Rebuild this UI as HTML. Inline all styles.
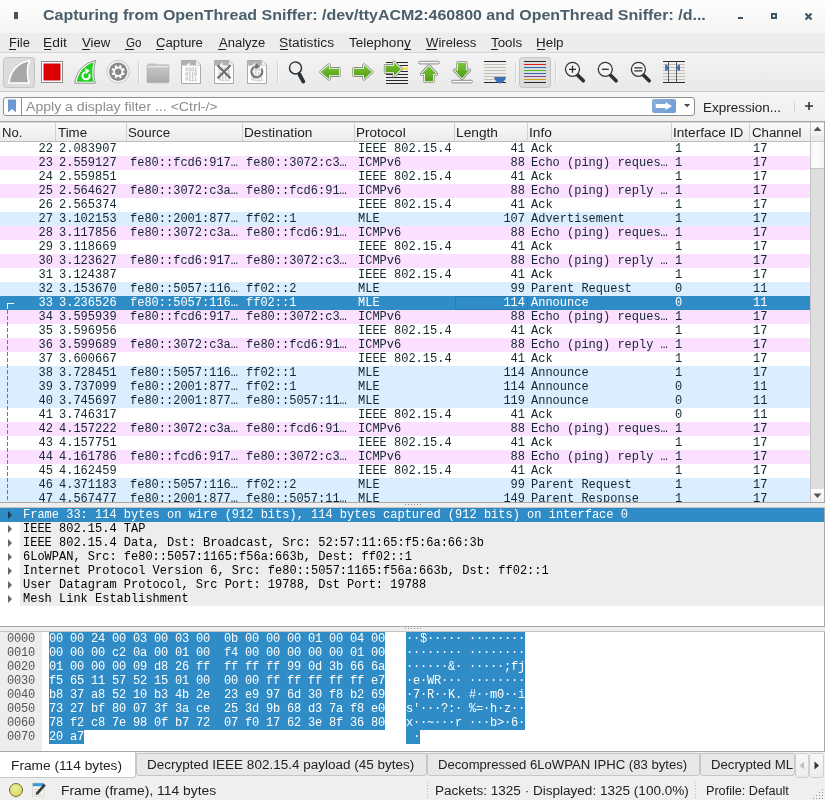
<!DOCTYPE html>
<html><head><meta charset="utf-8">
<style>
*{margin:0;padding:0;box-sizing:border-box}
body{will-change:transform}
html,body{width:825px;height:800px;overflow:hidden;background:#efefef;font-family:"Liberation Sans",sans-serif;color:#1b1b1b;position:relative}
.a{position:absolute;white-space:pre}
.m{font-family:"Liberation Mono",monospace;font-size:12px;line-height:14px}
u{text-decoration:none;border-bottom:1px solid currentColor}
</style></head><body>

<div class="a" style="left:0;top:0;width:825px;height:33px;background:linear-gradient(#fefefe,#f5f4f3)"></div>
<div class="a" style="left:14px;top:12px;width:4px;height:7px;background:#3f5563"></div>
<div class="a" style="left:43.00px;top:5px;font-size:15px;line-height:20px;font-weight:bold;color:#4a5e6c;transform:scaleX(1.0660);transform-origin:0 0;">Capturing from OpenThread Sniffer: /dev/ttyACM2:460800 and OpenThread Sniffer: /d...</div>
<div class="a" style="left:738px;top:17px;width:5px;height:2px;background:#3f5563"></div>
<div class="a" style="left:771px;top:13px;width:6px;height:6px;border:2px solid #3f5563"></div>
<svg class="a" style="left:804px;top:12px" width="9" height="9"><path d="M1.5 1.5 L7.5 7.5 M7.5 1.5 L1.5 7.5" stroke="#3f5563" stroke-width="2.2"/></svg>
<div class="a" style="left:0;top:33px;width:825px;height:20px;background:#ececec;border-bottom:1px solid #d6d6d6"></div>
<div class="a" style="left:8.52px;top:33px;font-size:12px;line-height:20px;font-weight:normal;color:#222222;transform:scaleX(1.0833);transform-origin:0 0;">File</div>
<div class="a" style="left:43.05px;top:33px;font-size:12px;line-height:20px;font-weight:normal;color:#222222;transform:scaleX(1.1550);transform-origin:0 0;">Edit</div>
<div class="a" style="left:81.80px;top:33px;font-size:12px;line-height:20px;font-weight:normal;color:#222222;transform:scaleX(1.1000);transform-origin:0 0;">View</div>
<div class="a" style="left:125.50px;top:33px;font-size:12px;line-height:20px;font-weight:normal;color:#222222;transform:scaleX(0.9625);transform-origin:0 0;">Go</div>
<div class="a" style="left:156.00px;top:33px;font-size:12px;line-height:20px;font-weight:normal;color:#222222;transform:scaleX(1.1000);transform-origin:0 0;">Capture</div>
<div class="a" style="left:218.60px;top:33px;font-size:12px;line-height:20px;font-weight:normal;color:#222222;transform:scaleX(1.0837);transform-origin:0 0;">Analyze</div>
<div class="a" style="left:279.05px;top:33px;font-size:12px;line-height:20px;font-weight:normal;color:#222222;transform:scaleX(1.1489);transform-origin:0 0;">Statistics</div>
<div class="a" style="left:349.30px;top:33px;font-size:12px;line-height:20px;font-weight:normal;color:#222222;transform:scaleX(1.1273);transform-origin:0 0;">Telephony</div>
<div class="a" style="left:425.80px;top:33px;font-size:12px;line-height:20px;font-weight:normal;color:#222222;transform:scaleX(1.0935);transform-origin:0 0;">Wireless</div>
<div class="a" style="left:491.30px;top:33px;font-size:12px;line-height:20px;font-weight:normal;color:#222222;transform:scaleX(1.1107);transform-origin:0 0;">Tools</div>
<div class="a" style="left:536.08px;top:33px;font-size:12px;line-height:20px;font-weight:normal;color:#222222;transform:scaleX(1.1167);transform-origin:0 0;">Help</div>
<div class="a" style="left:9px;top:49px;width:7px;height:1px;background:#222"></div>
<div class="a" style="left:44px;top:49px;width:7px;height:1px;background:#222"></div>
<div class="a" style="left:82px;top:49px;width:8px;height:1px;background:#222"></div>
<div class="a" style="left:125px;top:49px;width:9px;height:1px;background:#222"></div>
<div class="a" style="left:156px;top:49px;width:8px;height:1px;background:#222"></div>
<div class="a" style="left:218px;top:49px;width:8px;height:1px;background:#222"></div>
<div class="a" style="left:280px;top:49px;width:8px;height:1px;background:#222"></div>
<div class="a" style="left:404px;top:49px;width:7px;height:1px;background:#222"></div>
<div class="a" style="left:426px;top:49px;width:11px;height:1px;background:#222"></div>
<div class="a" style="left:491px;top:49px;width:7px;height:1px;background:#222"></div>
<div class="a" style="left:537px;top:49px;width:8px;height:1px;background:#222"></div>
<div class="a" style="left:0;top:53px;width:825px;height:39px;background:linear-gradient(#f3f3f3,#e9e9e9);border-bottom:1px solid #cdcdcd"></div>
<svg class="a" style="left:0;top:0" width="825" height="92" viewBox="0 0 825 92"><defs><linearGradient id="gf" x1="0" y1="0" x2="0" y2="1"><stop offset="0" stop-color="#c9c9c9"/><stop offset="1" stop-color="#a9a9a9"/></linearGradient><linearGradient id="gg" x1="0" y1="0" x2="0" y2="1"><stop offset="0" stop-color="#7cc63a"/><stop offset="1" stop-color="#4e9a10"/></linearGradient></defs><rect x="3.5" y="57.5" width="31" height="30" rx="3" fill="#dcdcdc" stroke="#c4c4c4"/><path d="M9 83 C10 72 17 63 29.5 60.5 C27 67 27 76 29 83 Z" fill="#a8a8a8" stroke="#ffffff" stroke-width="1.6"/><rect x="41.5" y="61.5" width="21" height="21" fill="#fff" stroke="#8a8a8a"/><rect x="43.5" y="63.5" width="17" height="17" fill="#dd0000"/><path d="M74.8 83.2 C75.8 72 84 62.5 95.8 60.5 C93.3 67 93.3 76 95.3 83.2 Z" fill="#fff" stroke="#8f8f8f" stroke-width="1"/><path d="M76.8 81.8 C78 72.5 85.5 64.5 93.6 62.3 C91.8 68.5 91.8 76 93.6 81.8 Z" fill="#22d022"/><path d="M85 72.3 A3.6 3.6 0 1 0 89.2 74" fill="none" stroke="#fff" stroke-width="2"/><path d="M85.2 68.2 L89.8 70.5 L85.8 74.2 Z" fill="#fff"/><circle cx="118.2" cy="71.7" r="11.2" fill="#f7f7f7" stroke="#c6c6c6" stroke-width="1"/><circle cx="118.2" cy="71.7" r="9.2" fill="#8a8a8a"/><rect x="117.10000000000001" y="65.0" width="2.2" height="2.5" fill="#fff" transform="rotate(22.5 118.2 71.7)"/><rect x="117.10000000000001" y="65.0" width="2.2" height="2.5" fill="#fff" transform="rotate(67.5 118.2 71.7)"/><rect x="117.10000000000001" y="65.0" width="2.2" height="2.5" fill="#fff" transform="rotate(112.5 118.2 71.7)"/><rect x="117.10000000000001" y="65.0" width="2.2" height="2.5" fill="#fff" transform="rotate(157.5 118.2 71.7)"/><rect x="117.10000000000001" y="65.0" width="2.2" height="2.5" fill="#fff" transform="rotate(202.5 118.2 71.7)"/><rect x="117.10000000000001" y="65.0" width="2.2" height="2.5" fill="#fff" transform="rotate(247.5 118.2 71.7)"/><rect x="117.10000000000001" y="65.0" width="2.2" height="2.5" fill="#fff" transform="rotate(292.5 118.2 71.7)"/><rect x="117.10000000000001" y="65.0" width="2.2" height="2.5" fill="#fff" transform="rotate(337.5 118.2 71.7)"/><circle cx="118.2" cy="71.7" r="5" fill="#fff"/><circle cx="118.2" cy="71.7" r="3.3" fill="#8a8a8a"/><line x1="138.5" y1="62" x2="138.5" y2="83" stroke="#d0d0d0"/><line x1="139.5" y1="62" x2="139.5" y2="83" stroke="#fbfbfb"/><line x1="277.5" y1="62" x2="277.5" y2="83" stroke="#d0d0d0"/><line x1="278.5" y1="62" x2="278.5" y2="83" stroke="#fbfbfb"/><line x1="515.5" y1="62" x2="515.5" y2="83" stroke="#d0d0d0"/><line x1="516.5" y1="62" x2="516.5" y2="83" stroke="#fbfbfb"/><line x1="555.5" y1="62" x2="555.5" y2="83" stroke="#d0d0d0"/><line x1="556.5" y1="62" x2="556.5" y2="83" stroke="#fbfbfb"/><path d="M147.5 65 L149 63.3 L155 63.3 L156 65 Z" fill="#cfcfcf"/><rect x="147" y="64.8" width="22" height="18" rx="1" fill="url(#gf)" stroke="#b0b0b0" stroke-width="0.6"/><line x1="147.5" y1="66.8" x2="168.5" y2="66.8" stroke="#f6f6f6" stroke-width="1"/><path d="M181.5 60.5 L196 60.5 L200.5 65 L200.5 83.5 L181.5 83.5 Z" fill="#fdfdfd" stroke="#aaaaaa"/><path d="M182 61 L195.8 61 L200 65.2 L200 65.5 L182 65.5 Z" fill="#b2b2b2"/><path d="M186 65.5 C188 64 189 63 189.5 62 C189.5 63.5 189.5 64.5 190 65.5 Z" fill="#fdfdfd"/><path d="M196 61 L196 65 L200 65 Z" fill="#f4f4f4"/><ellipse cx="186.80" cy="69.20" rx="0.95" ry="1.6" fill="none" stroke="#b4b4b4" stroke-width="0.8"/><path d="M188.90 68.10 L189.90 67.50 V71.10 M188.80 71.10 H190.80" fill="none" stroke="#b4b4b4" stroke-width="0.8"/><ellipse cx="192.60" cy="69.20" rx="0.95" ry="1.6" fill="none" stroke="#b4b4b4" stroke-width="0.8"/><path d="M194.70 68.10 L195.70 67.50 V71.10 M194.60 71.10 H196.60" fill="none" stroke="#b4b4b4" stroke-width="0.8"/><ellipse cx="186.80" cy="74.00" rx="0.95" ry="1.6" fill="none" stroke="#b4b4b4" stroke-width="0.8"/><path d="M188.90 72.90 L189.90 72.30 V75.90 M188.80 75.90 H190.80" fill="none" stroke="#b4b4b4" stroke-width="0.8"/><path d="M191.80 72.90 L192.80 72.30 V75.90 M191.70 75.90 H193.70" fill="none" stroke="#b4b4b4" stroke-width="0.8"/><ellipse cx="195.50" cy="74.00" rx="0.95" ry="1.6" fill="none" stroke="#b4b4b4" stroke-width="0.8"/><ellipse cx="186.80" cy="78.80" rx="0.95" ry="1.6" fill="none" stroke="#b4b4b4" stroke-width="0.8"/><path d="M188.90 77.70 L189.90 77.10 V80.70 M188.80 80.70 H190.80" fill="none" stroke="#b4b4b4" stroke-width="0.8"/><path d="M191.80 77.70 L192.80 77.10 V80.70 M191.70 80.70 H193.70" fill="none" stroke="#b4b4b4" stroke-width="0.8"/><path d="M194.70 77.70 L195.70 77.10 V80.70 M194.60 80.70 H196.60" fill="none" stroke="#b4b4b4" stroke-width="0.8"/><path d="M214.5 60.5 L229 60.5 L233.5 65 L233.5 83.5 L214.5 83.5 Z" fill="#fdfdfd" stroke="#aaaaaa"/><path d="M215 61 L228.8 61 L233 65.2 L233 65.5 L215 65.5 Z" fill="#b2b2b2"/><path d="M219 65.5 C221 64 222 63 222.5 62 C222.5 63.5 222.5 64.5 223 65.5 Z" fill="#fdfdfd"/><path d="M229 61 L229 65 L233 65 Z" fill="#f4f4f4"/><ellipse cx="219.80" cy="69.20" rx="0.95" ry="1.6" fill="none" stroke="#b4b4b4" stroke-width="0.8"/><path d="M221.90 68.10 L222.90 67.50 V71.10 M221.80 71.10 H223.80" fill="none" stroke="#b4b4b4" stroke-width="0.8"/><ellipse cx="225.60" cy="69.20" rx="0.95" ry="1.6" fill="none" stroke="#b4b4b4" stroke-width="0.8"/><path d="M227.70 68.10 L228.70 67.50 V71.10 M227.60 71.10 H229.60" fill="none" stroke="#b4b4b4" stroke-width="0.8"/><ellipse cx="219.80" cy="74.00" rx="0.95" ry="1.6" fill="none" stroke="#b4b4b4" stroke-width="0.8"/><path d="M221.90 72.90 L222.90 72.30 V75.90 M221.80 75.90 H223.80" fill="none" stroke="#b4b4b4" stroke-width="0.8"/><path d="M224.80 72.90 L225.80 72.30 V75.90 M224.70 75.90 H226.70" fill="none" stroke="#b4b4b4" stroke-width="0.8"/><ellipse cx="228.50" cy="74.00" rx="0.95" ry="1.6" fill="none" stroke="#b4b4b4" stroke-width="0.8"/><ellipse cx="219.80" cy="78.80" rx="0.95" ry="1.6" fill="none" stroke="#b4b4b4" stroke-width="0.8"/><path d="M221.90 77.70 L222.90 77.10 V80.70 M221.80 80.70 H223.80" fill="none" stroke="#b4b4b4" stroke-width="0.8"/><path d="M224.80 77.70 L225.80 77.10 V80.70 M224.70 80.70 H226.70" fill="none" stroke="#b4b4b4" stroke-width="0.8"/><path d="M227.70 77.70 L228.70 77.10 V80.70 M227.60 80.70 H229.60" fill="none" stroke="#b4b4b4" stroke-width="0.8"/><path d="M217.5 65.2 L230.5 78.2 M230.5 65.2 L217.5 78.2" stroke="#6a6a6a" stroke-width="2"/><path d="M247.5 60.5 L262 60.5 L266.5 65 L266.5 83.5 L247.5 83.5 Z" fill="#fdfdfd" stroke="#aaaaaa"/><path d="M248 61 L261.8 61 L266 65.2 L266 65.5 L248 65.5 Z" fill="#b2b2b2"/><path d="M252 65.5 C254 64 255 63 255.5 62 C255.5 63.5 255.5 64.5 256 65.5 Z" fill="#fdfdfd"/><path d="M262 61 L262 65 L266 65 Z" fill="#f4f4f4"/><ellipse cx="252.80" cy="69.20" rx="0.95" ry="1.6" fill="none" stroke="#b4b4b4" stroke-width="0.8"/><path d="M254.90 68.10 L255.90 67.50 V71.10 M254.80 71.10 H256.80" fill="none" stroke="#b4b4b4" stroke-width="0.8"/><ellipse cx="258.60" cy="69.20" rx="0.95" ry="1.6" fill="none" stroke="#b4b4b4" stroke-width="0.8"/><path d="M260.70 68.10 L261.70 67.50 V71.10 M260.60 71.10 H262.60" fill="none" stroke="#b4b4b4" stroke-width="0.8"/><ellipse cx="252.80" cy="74.00" rx="0.95" ry="1.6" fill="none" stroke="#b4b4b4" stroke-width="0.8"/><path d="M254.90 72.90 L255.90 72.30 V75.90 M254.80 75.90 H256.80" fill="none" stroke="#b4b4b4" stroke-width="0.8"/><path d="M257.80 72.90 L258.80 72.30 V75.90 M257.70 75.90 H259.70" fill="none" stroke="#b4b4b4" stroke-width="0.8"/><ellipse cx="261.50" cy="74.00" rx="0.95" ry="1.6" fill="none" stroke="#b4b4b4" stroke-width="0.8"/><ellipse cx="252.80" cy="78.80" rx="0.95" ry="1.6" fill="none" stroke="#b4b4b4" stroke-width="0.8"/><path d="M254.90 77.70 L255.90 77.10 V80.70 M254.80 80.70 H256.80" fill="none" stroke="#b4b4b4" stroke-width="0.8"/><path d="M257.80 77.70 L258.80 77.10 V80.70 M257.70 80.70 H259.70" fill="none" stroke="#b4b4b4" stroke-width="0.8"/><path d="M260.70 77.70 L261.70 77.10 V80.70 M260.60 80.70 H262.60" fill="none" stroke="#b4b4b4" stroke-width="0.8"/><path d="M256.8 66.3 A5.5 5.5 0 1 0 261.56 69.05" fill="none" stroke="#707070" stroke-width="1.9"/><path d="M255.5 63.3 L260.3 66.3 L255.5 69.3 Z" fill="#707070"/><line x1="299.5" y1="74.5" x2="303.3" y2="81.6" stroke="#2b3236" stroke-width="3.8" stroke-linecap="round"/><circle cx="295.5" cy="67.9" r="6" fill="#f0f0f0" stroke="#2f3539" stroke-width="1.5"/><path d="M291.2 65.5 A4.5 4.5 0 0 1 295.5 63.2" fill="none" stroke="#fff" stroke-width="1.2"/><path d="M291.5 64.3 A5 5 0 0 1 295.8 62.6" fill="none" stroke="#444" stroke-width="0.5"/><path d="M321 72 L329 65 L329 68.8 L339 68.8 L339 75.2 L329 75.2 L329 79 Z" fill="none" stroke="#8a8a8a" stroke-width="3.4" stroke-linejoin="round"/><path d="M321 72 L329 65 L329 68.8 L339 68.8 L339 75.2 L329 75.2 L329 79 Z" fill="none" stroke="#fafafa" stroke-width="1.7" stroke-linejoin="round"/><path d="M321 72 L329 65 L329 68.8 L339 68.8 L339 75.2 L329 75.2 L329 79 Z" fill="url(#gg)"/><path d="M372 72 L364 65 L364 68.8 L354 68.8 L354 75.2 L364 75.2 L364 79 Z" fill="none" stroke="#8a8a8a" stroke-width="3.4" stroke-linejoin="round"/><path d="M372 72 L364 65 L364 68.8 L354 68.8 L354 75.2 L364 75.2 L364 79 Z" fill="none" stroke="#fafafa" stroke-width="1.7" stroke-linejoin="round"/><path d="M372 72 L364 65 L364 68.8 L354 68.8 L354 75.2 L364 75.2 L364 79 Z" fill="url(#gg)"/><line x1="386" y1="62.5" x2="408" y2="62.5" stroke="#2a2a2a" stroke-width="1"/><line x1="386" y1="65.5" x2="408" y2="65.5" stroke="#2a2a2a" stroke-width="1"/><line x1="386" y1="71.5" x2="408" y2="71.5" stroke="#2a2a2a" stroke-width="1"/><line x1="386" y1="74.5" x2="408" y2="74.5" stroke="#2a2a2a" stroke-width="1"/><line x1="386" y1="77.5" x2="408" y2="77.5" stroke="#2a2a2a" stroke-width="1"/><line x1="386" y1="80.5" x2="408" y2="80.5" stroke="#2a2a2a" stroke-width="1"/><line x1="386" y1="83.5" x2="408" y2="83.5" stroke="#2a2a2a" stroke-width="1"/><rect x="400" y="67.5" width="8" height="2.5" fill="#f5dc3c"/><path d="M401 69 L394 62.2 L394 65.8 L385.5 65.8 L385.5 72.2 L394 72.2 L394 75.8 Z" fill="none" stroke="#8a8a8a" stroke-width="3.4" stroke-linejoin="round"/><path d="M401 69 L394 62.2 L394 65.8 L385.5 65.8 L385.5 72.2 L394 72.2 L394 75.8 Z" fill="none" stroke="#fafafa" stroke-width="1.7" stroke-linejoin="round"/><path d="M401 69 L394 62.2 L394 65.8 L385.5 65.8 L385.5 72.2 L394 72.2 L394 75.8 Z" fill="url(#gg)"/><rect x="418.5" y="61.3" width="21" height="2.6" rx="1.3" fill="#fafafa" stroke="#808080" stroke-width="0.9"/><path d="M429 66 L436.3 74 L433 74 L433 81.3 L425 81.3 L425 74 L421.7 74 Z" fill="none" stroke="#8a8a8a" stroke-width="3.4" stroke-linejoin="round"/><path d="M429 66 L436.3 74 L433 74 L433 81.3 L425 81.3 L425 74 L421.7 74 Z" fill="none" stroke="#fafafa" stroke-width="1.7" stroke-linejoin="round"/><path d="M429 66 L436.3 74 L433 74 L433 81.3 L425 81.3 L425 74 L421.7 74 Z" fill="url(#gg)"/><path d="M462 78.3 L469.3 70.3 L466 70.3 L466 63 L458 63 L458 70.3 L454.7 70.3 Z" fill="none" stroke="#8a8a8a" stroke-width="3.4" stroke-linejoin="round"/><path d="M462 78.3 L469.3 70.3 L466 70.3 L466 63 L458 63 L458 70.3 L454.7 70.3 Z" fill="none" stroke="#fafafa" stroke-width="1.7" stroke-linejoin="round"/><path d="M462 78.3 L469.3 70.3 L466 70.3 L466 63 L458 63 L458 70.3 L454.7 70.3 Z" fill="url(#gg)"/><rect x="451.5" y="80.3" width="21" height="2.6" rx="1.3" fill="#fafafa" stroke="#808080" stroke-width="0.9"/><line x1="484" y1="61.5" x2="506" y2="61.5" stroke="#2a2a2a"/><line x1="484" y1="64.5" x2="506" y2="64.5" stroke="#c0c0b6"/><line x1="484" y1="67.5" x2="506" y2="67.5" stroke="#c0c0b6"/><line x1="484" y1="70.5" x2="506" y2="70.5" stroke="#c0c0b6"/><line x1="484" y1="73.5" x2="506" y2="73.5" stroke="#c0c0b6"/><line x1="484" y1="76.5" x2="506" y2="76.5" stroke="#c0c0b6"/><line x1="484" y1="79.5" x2="506" y2="79.5" stroke="#c0c0b6"/><line x1="484" y1="82.5" x2="506" y2="82.5" stroke="#2a2a2a"/><path d="M494 77 L506 77 Q505 82 500 83.5 Q495 82 494 77 Z" fill="#3a6fb5"/><rect x="519.5" y="57.5" width="31" height="30" rx="3" fill="#dcdcdc" stroke="#c4c4c4"/><line x1="524" y1="61.5" x2="546" y2="61.5" stroke="#2a2a2a" stroke-width="1"/><line x1="524" y1="64.5" x2="546" y2="64.5" stroke="#e02020" stroke-width="1"/><line x1="524" y1="67.5" x2="546" y2="67.5" stroke="#3a62b0" stroke-width="1"/><line x1="524" y1="70.5" x2="546" y2="70.5" stroke="#4ac020" stroke-width="1"/><line x1="524" y1="73.5" x2="546" y2="73.5" stroke="#3a62b0" stroke-width="1"/><line x1="524" y1="76.5" x2="546" y2="76.5" stroke="#7a4a90" stroke-width="1"/><line x1="524" y1="79.5" x2="546" y2="79.5" stroke="#d0a010" stroke-width="1"/><line x1="524" y1="82.5" x2="546" y2="82.5" stroke="#2a2a2a" stroke-width="1"/><line x1="577.5" y1="75" x2="583.3" y2="80.8" stroke="#2b3236" stroke-width="3.6" stroke-linecap="round"/><circle cx="572.5" cy="69.3" r="7" fill="#f3f3f3" stroke="#2f3539" stroke-width="1.3"/><path d="M569 69.3 H576 M572.5 65.8 V72.8" stroke="#2a2a2a" stroke-width="1.3"/><line x1="610.3" y1="75" x2="616.0999999999999" y2="80.8" stroke="#2b3236" stroke-width="3.6" stroke-linecap="round"/><circle cx="605.3" cy="69.3" r="7" fill="#f3f3f3" stroke="#2f3539" stroke-width="1.3"/><path d="M601.8 69.3 H608.8" stroke="#2a2a2a" stroke-width="1.3"/><line x1="643.4" y1="75" x2="649.1999999999999" y2="80.8" stroke="#2b3236" stroke-width="3.6" stroke-linecap="round"/><circle cx="638.4" cy="69.3" r="7" fill="#f3f3f3" stroke="#2f3539" stroke-width="1.3"/><path d="M634.4 67.8 H642.4 M634.4 70.8 H642.4" stroke="#2a2a2a" stroke-width="1.3"/><line x1="663" y1="61.5" x2="685" y2="61.5" stroke="#2a2a2a"/><line x1="663" y1="64.5" x2="685" y2="64.5" stroke="#c0c0b6"/><line x1="663" y1="67.5" x2="685" y2="67.5" stroke="#c0c0b6"/><line x1="663" y1="70.5" x2="685" y2="70.5" stroke="#c0c0b6"/><line x1="663" y1="73.5" x2="685" y2="73.5" stroke="#c0c0b6"/><line x1="663" y1="76.5" x2="685" y2="76.5" stroke="#c0c0b6"/><line x1="663" y1="79.5" x2="685" y2="79.5" stroke="#c0c0b6"/><line x1="663" y1="82.5" x2="685" y2="82.5" stroke="#2a2a2a"/><line x1="668.5" y1="61" x2="668.5" y2="83" stroke="#5a5a5a"/><line x1="676.5" y1="61" x2="676.5" y2="83" stroke="#5a5a5a"/><path d="M665.2 64.8 L666.5 64.5 L669 67.7 L666.5 70.9 L665.2 70.6 Z" fill="#3a6fb5"/><path d="M680 64.8 L678.7 64.5 L676.2 67.7 L678.7 70.9 L680 70.6 Z" fill="#3a6fb5"/></svg>
<div class="a" style="left:0;top:92px;width:825px;height:29px;background:linear-gradient(#f5f5f5,#eeeeee)"></div>
<div class="a" style="left:3px;top:97px;width:692px;height:19px;background:#fff;border:1px solid #8f8f8f;border-radius:3px"></div>
<div class="a" style="left:21px;top:98px;width:1px;height:17px;background:#8f8f8f"></div>
<svg class="a" style="left:7px;top:99px" width="10" height="14"><path d="M1 0.5 H9 V13.5 L5 10 L1 13.5 Z" fill="#6d9bd1"/></svg>
<div class="a" style="left:25.60px;top:97px;font-size:12px;line-height:20px;font-weight:normal;color:#8c8c8c;transform:scaleX(1.1724);transform-origin:0 0;">Apply a display filter ... &lt;Ctrl-/&gt;</div>
<div class="a" style="left:652px;top:99px;width:24px;height:14px;background:linear-gradient(135deg,#8aaedb,#6b9bd2);border-radius:2px"></div>
<svg class="a" style="left:645px;top:94px" width="50" height="20"><path d="M10.7 10 H20.5 V7.9 L27 12.2 L20.5 16.1 V14 H10.7 Z" fill="#fff"/></svg>
<svg class="a" style="left:680px;top:100px" width="14" height="10"><path d="M4 4 H10.2 L7.1 7.3 Z" fill="#4a4a4a"/></svg>
<div class="a" style="left:703.38px;top:98px;font-size:12px;line-height:20px;font-weight:normal;color:#222222;transform:scaleX(1.1250);transform-origin:0 0;">Expression...</div>
<div class="a" style="left:794px;top:102px;width:1px;height:10px;background:#d4d4d4"></div>
<svg class="a" style="left:804px;top:101px" width="10" height="10"><path d="M5 1 V9 M1 5 H9" stroke="#333" stroke-width="1.6"/></svg>
<div class="a" style="left:0;top:121px;width:825px;height:382px;background:#fff;border-top:1px solid #a4a4a4;border-bottom:1px solid #a8a8a8;border-right:1px solid #a8a8a8"></div>
<div class="a" style="left:0;top:122px;width:810px;height:20px;background:linear-gradient(#f9f9f9,#ebebeb);border-top:1px solid #dadada;border-bottom:1px solid #bdbdbd"></div>
<div class="a" style="left:55px;top:123px;width:1px;height:18px;background:#d0d0d0"></div>
<div class="a" style="left:126px;top:123px;width:1px;height:18px;background:#d0d0d0"></div>
<div class="a" style="left:242px;top:123px;width:1px;height:18px;background:#d0d0d0"></div>
<div class="a" style="left:354px;top:123px;width:1px;height:18px;background:#d0d0d0"></div>
<div class="a" style="left:454px;top:123px;width:1px;height:18px;background:#d0d0d0"></div>
<div class="a" style="left:527px;top:123px;width:1px;height:18px;background:#d0d0d0"></div>
<div class="a" style="left:671px;top:123px;width:1px;height:18px;background:#d0d0d0"></div>
<div class="a" style="left:749px;top:123px;width:1px;height:18px;background:#d0d0d0"></div>
<div class="a" style="left:1.61px;top:123px;font-size:12px;line-height:20px;font-weight:normal;color:#222222;transform:scaleX(1.0882);transform-origin:0 0;">No.</div>
<div class="a" style="left:58.20px;top:123px;font-size:12px;line-height:20px;font-weight:normal;color:#222222;transform:scaleX(1.1077);transform-origin:0 0;">Time</div>
<div class="a" style="left:128.09px;top:123px;font-size:12px;line-height:20px;font-weight:normal;color:#222222;transform:scaleX(1.1081);transform-origin:0 0;">Source</div>
<div class="a" style="left:244.36px;top:123px;font-size:12px;line-height:20px;font-weight:normal;color:#222222;transform:scaleX(1.1390);transform-origin:0 0;">Destination</div>
<div class="a" style="left:355.87px;top:123px;font-size:12px;line-height:20px;font-weight:normal;color:#222222;transform:scaleX(1.1279);transform-origin:0 0;">Protocol</div>
<div class="a" style="left:456.36px;top:123px;font-size:12px;line-height:20px;font-weight:normal;color:#222222;transform:scaleX(1.1429);transform-origin:0 0;">Length</div>
<div class="a" style="left:529.05px;top:123px;font-size:12px;line-height:20px;font-weight:normal;color:#222222;transform:scaleX(1.1474);transform-origin:0 0;">Info</div>
<div class="a" style="left:673.37px;top:123px;font-size:12px;line-height:20px;font-weight:normal;color:#222222;transform:scaleX(1.1328);transform-origin:0 0;">Interface ID</div>
<div class="a" style="left:752.00px;top:123px;font-size:12px;line-height:20px;font-weight:normal;color:#222222;transform:scaleX(1.1068);transform-origin:0 0;">Channel</div>
<div class="a" style="left:0;top:142px;width:810px;height:360px;overflow:hidden">
<div class="a" style="left:0;top:0px;width:810px;height:14px;background:#ffffff"></div>
<div class="a m" style="left:0px;width:53px;text-align:right;top:0px;color:#12272e">22</div>
<div class="a m" style="left:59px;top:0px;color:#12272e">2.083907</div>
<div class="a m" style="left:358px;top:0px;color:#12272e">IEEE 802.15.4</div>
<div class="a m" style="left:454px;width:71px;text-align:right;top:0px;color:#12272e">41</div>
<div class="a m" style="left:531px;top:0px;color:#12272e">Ack</div>
<div class="a m" style="left:675px;top:0px;color:#12272e">1</div>
<div class="a m" style="left:753px;top:0px;color:#12272e">17</div>
<div class="a" style="left:0;top:14px;width:810px;height:14px;background:#fce0ff"></div>
<div class="a m" style="left:0px;width:53px;text-align:right;top:14px;color:#12272e">23</div>
<div class="a m" style="left:59px;top:14px;color:#12272e">2.559127</div>
<div class="a m" style="left:130px;top:14px;color:#12272e">fe80::fcd6:917…</div>
<div class="a m" style="left:246px;top:14px;color:#12272e">fe80::3072:c3…</div>
<div class="a m" style="left:358px;top:14px;color:#12272e">ICMPv6</div>
<div class="a m" style="left:454px;width:71px;text-align:right;top:14px;color:#12272e">88</div>
<div class="a m" style="left:531px;top:14px;color:#12272e">Echo (ping) reques…</div>
<div class="a m" style="left:675px;top:14px;color:#12272e">1</div>
<div class="a m" style="left:753px;top:14px;color:#12272e">17</div>
<div class="a" style="left:0;top:28px;width:810px;height:14px;background:#ffffff"></div>
<div class="a m" style="left:0px;width:53px;text-align:right;top:28px;color:#12272e">24</div>
<div class="a m" style="left:59px;top:28px;color:#12272e">2.559851</div>
<div class="a m" style="left:358px;top:28px;color:#12272e">IEEE 802.15.4</div>
<div class="a m" style="left:454px;width:71px;text-align:right;top:28px;color:#12272e">41</div>
<div class="a m" style="left:531px;top:28px;color:#12272e">Ack</div>
<div class="a m" style="left:675px;top:28px;color:#12272e">1</div>
<div class="a m" style="left:753px;top:28px;color:#12272e">17</div>
<div class="a" style="left:0;top:42px;width:810px;height:14px;background:#fce0ff"></div>
<div class="a m" style="left:0px;width:53px;text-align:right;top:42px;color:#12272e">25</div>
<div class="a m" style="left:59px;top:42px;color:#12272e">2.564627</div>
<div class="a m" style="left:130px;top:42px;color:#12272e">fe80::3072:c3a…</div>
<div class="a m" style="left:246px;top:42px;color:#12272e">fe80::fcd6:91…</div>
<div class="a m" style="left:358px;top:42px;color:#12272e">ICMPv6</div>
<div class="a m" style="left:454px;width:71px;text-align:right;top:42px;color:#12272e">88</div>
<div class="a m" style="left:531px;top:42px;color:#12272e">Echo (ping) reply …</div>
<div class="a m" style="left:675px;top:42px;color:#12272e">1</div>
<div class="a m" style="left:753px;top:42px;color:#12272e">17</div>
<div class="a" style="left:0;top:56px;width:810px;height:14px;background:#ffffff"></div>
<div class="a m" style="left:0px;width:53px;text-align:right;top:56px;color:#12272e">26</div>
<div class="a m" style="left:59px;top:56px;color:#12272e">2.565374</div>
<div class="a m" style="left:358px;top:56px;color:#12272e">IEEE 802.15.4</div>
<div class="a m" style="left:454px;width:71px;text-align:right;top:56px;color:#12272e">41</div>
<div class="a m" style="left:531px;top:56px;color:#12272e">Ack</div>
<div class="a m" style="left:675px;top:56px;color:#12272e">1</div>
<div class="a m" style="left:753px;top:56px;color:#12272e">17</div>
<div class="a" style="left:0;top:70px;width:810px;height:14px;background:#daeeff"></div>
<div class="a m" style="left:0px;width:53px;text-align:right;top:70px;color:#12272e">27</div>
<div class="a m" style="left:59px;top:70px;color:#12272e">3.102153</div>
<div class="a m" style="left:130px;top:70px;color:#12272e">fe80::2001:877…</div>
<div class="a m" style="left:246px;top:70px;color:#12272e">ff02::1</div>
<div class="a m" style="left:358px;top:70px;color:#12272e">MLE</div>
<div class="a m" style="left:454px;width:71px;text-align:right;top:70px;color:#12272e">107</div>
<div class="a m" style="left:531px;top:70px;color:#12272e">Advertisement</div>
<div class="a m" style="left:675px;top:70px;color:#12272e">1</div>
<div class="a m" style="left:753px;top:70px;color:#12272e">17</div>
<div class="a" style="left:0;top:84px;width:810px;height:14px;background:#fce0ff"></div>
<div class="a m" style="left:0px;width:53px;text-align:right;top:84px;color:#12272e">28</div>
<div class="a m" style="left:59px;top:84px;color:#12272e">3.117856</div>
<div class="a m" style="left:130px;top:84px;color:#12272e">fe80::3072:c3a…</div>
<div class="a m" style="left:246px;top:84px;color:#12272e">fe80::fcd6:91…</div>
<div class="a m" style="left:358px;top:84px;color:#12272e">ICMPv6</div>
<div class="a m" style="left:454px;width:71px;text-align:right;top:84px;color:#12272e">88</div>
<div class="a m" style="left:531px;top:84px;color:#12272e">Echo (ping) reques…</div>
<div class="a m" style="left:675px;top:84px;color:#12272e">1</div>
<div class="a m" style="left:753px;top:84px;color:#12272e">17</div>
<div class="a" style="left:0;top:98px;width:810px;height:14px;background:#ffffff"></div>
<div class="a m" style="left:0px;width:53px;text-align:right;top:98px;color:#12272e">29</div>
<div class="a m" style="left:59px;top:98px;color:#12272e">3.118669</div>
<div class="a m" style="left:358px;top:98px;color:#12272e">IEEE 802.15.4</div>
<div class="a m" style="left:454px;width:71px;text-align:right;top:98px;color:#12272e">41</div>
<div class="a m" style="left:531px;top:98px;color:#12272e">Ack</div>
<div class="a m" style="left:675px;top:98px;color:#12272e">1</div>
<div class="a m" style="left:753px;top:98px;color:#12272e">17</div>
<div class="a" style="left:0;top:112px;width:810px;height:14px;background:#fce0ff"></div>
<div class="a m" style="left:0px;width:53px;text-align:right;top:112px;color:#12272e">30</div>
<div class="a m" style="left:59px;top:112px;color:#12272e">3.123627</div>
<div class="a m" style="left:130px;top:112px;color:#12272e">fe80::fcd6:917…</div>
<div class="a m" style="left:246px;top:112px;color:#12272e">fe80::3072:c3…</div>
<div class="a m" style="left:358px;top:112px;color:#12272e">ICMPv6</div>
<div class="a m" style="left:454px;width:71px;text-align:right;top:112px;color:#12272e">88</div>
<div class="a m" style="left:531px;top:112px;color:#12272e">Echo (ping) reply …</div>
<div class="a m" style="left:675px;top:112px;color:#12272e">1</div>
<div class="a m" style="left:753px;top:112px;color:#12272e">17</div>
<div class="a" style="left:0;top:126px;width:810px;height:14px;background:#ffffff"></div>
<div class="a m" style="left:0px;width:53px;text-align:right;top:126px;color:#12272e">31</div>
<div class="a m" style="left:59px;top:126px;color:#12272e">3.124387</div>
<div class="a m" style="left:358px;top:126px;color:#12272e">IEEE 802.15.4</div>
<div class="a m" style="left:454px;width:71px;text-align:right;top:126px;color:#12272e">41</div>
<div class="a m" style="left:531px;top:126px;color:#12272e">Ack</div>
<div class="a m" style="left:675px;top:126px;color:#12272e">1</div>
<div class="a m" style="left:753px;top:126px;color:#12272e">17</div>
<div class="a" style="left:0;top:140px;width:810px;height:14px;background:#daeeff"></div>
<div class="a m" style="left:0px;width:53px;text-align:right;top:140px;color:#12272e">32</div>
<div class="a m" style="left:59px;top:140px;color:#12272e">3.153670</div>
<div class="a m" style="left:130px;top:140px;color:#12272e">fe80::5057:116…</div>
<div class="a m" style="left:246px;top:140px;color:#12272e">ff02::2</div>
<div class="a m" style="left:358px;top:140px;color:#12272e">MLE</div>
<div class="a m" style="left:454px;width:71px;text-align:right;top:140px;color:#12272e">99</div>
<div class="a m" style="left:531px;top:140px;color:#12272e">Parent Request</div>
<div class="a m" style="left:675px;top:140px;color:#12272e">0</div>
<div class="a m" style="left:753px;top:140px;color:#12272e">11</div>
<div class="a" style="left:0;top:154px;width:810px;height:14px;background:#308cc6"></div>
<div class="a m" style="left:0px;width:53px;text-align:right;top:154px;color:#ffffff">33</div>
<div class="a m" style="left:59px;top:154px;color:#ffffff">3.236526</div>
<div class="a m" style="left:130px;top:154px;color:#ffffff">fe80::5057:116…</div>
<div class="a m" style="left:246px;top:154px;color:#ffffff">ff02::1</div>
<div class="a m" style="left:358px;top:154px;color:#ffffff">MLE</div>
<div class="a m" style="left:454px;width:71px;text-align:right;top:154px;color:#ffffff">114</div>
<div class="a m" style="left:531px;top:154px;color:#ffffff">Announce</div>
<div class="a m" style="left:675px;top:154px;color:#ffffff">0</div>
<div class="a m" style="left:753px;top:154px;color:#ffffff">11</div>
<div class="a" style="left:0;top:168px;width:810px;height:14px;background:#fce0ff"></div>
<div class="a m" style="left:0px;width:53px;text-align:right;top:168px;color:#12272e">34</div>
<div class="a m" style="left:59px;top:168px;color:#12272e">3.595939</div>
<div class="a m" style="left:130px;top:168px;color:#12272e">fe80::fcd6:917…</div>
<div class="a m" style="left:246px;top:168px;color:#12272e">fe80::3072:c3…</div>
<div class="a m" style="left:358px;top:168px;color:#12272e">ICMPv6</div>
<div class="a m" style="left:454px;width:71px;text-align:right;top:168px;color:#12272e">88</div>
<div class="a m" style="left:531px;top:168px;color:#12272e">Echo (ping) reques…</div>
<div class="a m" style="left:675px;top:168px;color:#12272e">1</div>
<div class="a m" style="left:753px;top:168px;color:#12272e">17</div>
<div class="a" style="left:0;top:182px;width:810px;height:14px;background:#ffffff"></div>
<div class="a m" style="left:0px;width:53px;text-align:right;top:182px;color:#12272e">35</div>
<div class="a m" style="left:59px;top:182px;color:#12272e">3.596956</div>
<div class="a m" style="left:358px;top:182px;color:#12272e">IEEE 802.15.4</div>
<div class="a m" style="left:454px;width:71px;text-align:right;top:182px;color:#12272e">41</div>
<div class="a m" style="left:531px;top:182px;color:#12272e">Ack</div>
<div class="a m" style="left:675px;top:182px;color:#12272e">1</div>
<div class="a m" style="left:753px;top:182px;color:#12272e">17</div>
<div class="a" style="left:0;top:196px;width:810px;height:14px;background:#fce0ff"></div>
<div class="a m" style="left:0px;width:53px;text-align:right;top:196px;color:#12272e">36</div>
<div class="a m" style="left:59px;top:196px;color:#12272e">3.599689</div>
<div class="a m" style="left:130px;top:196px;color:#12272e">fe80::3072:c3a…</div>
<div class="a m" style="left:246px;top:196px;color:#12272e">fe80::fcd6:91…</div>
<div class="a m" style="left:358px;top:196px;color:#12272e">ICMPv6</div>
<div class="a m" style="left:454px;width:71px;text-align:right;top:196px;color:#12272e">88</div>
<div class="a m" style="left:531px;top:196px;color:#12272e">Echo (ping) reply …</div>
<div class="a m" style="left:675px;top:196px;color:#12272e">1</div>
<div class="a m" style="left:753px;top:196px;color:#12272e">17</div>
<div class="a" style="left:0;top:210px;width:810px;height:14px;background:#ffffff"></div>
<div class="a m" style="left:0px;width:53px;text-align:right;top:210px;color:#12272e">37</div>
<div class="a m" style="left:59px;top:210px;color:#12272e">3.600667</div>
<div class="a m" style="left:358px;top:210px;color:#12272e">IEEE 802.15.4</div>
<div class="a m" style="left:454px;width:71px;text-align:right;top:210px;color:#12272e">41</div>
<div class="a m" style="left:531px;top:210px;color:#12272e">Ack</div>
<div class="a m" style="left:675px;top:210px;color:#12272e">1</div>
<div class="a m" style="left:753px;top:210px;color:#12272e">17</div>
<div class="a" style="left:0;top:224px;width:810px;height:14px;background:#daeeff"></div>
<div class="a m" style="left:0px;width:53px;text-align:right;top:224px;color:#12272e">38</div>
<div class="a m" style="left:59px;top:224px;color:#12272e">3.728451</div>
<div class="a m" style="left:130px;top:224px;color:#12272e">fe80::5057:116…</div>
<div class="a m" style="left:246px;top:224px;color:#12272e">ff02::1</div>
<div class="a m" style="left:358px;top:224px;color:#12272e">MLE</div>
<div class="a m" style="left:454px;width:71px;text-align:right;top:224px;color:#12272e">114</div>
<div class="a m" style="left:531px;top:224px;color:#12272e">Announce</div>
<div class="a m" style="left:675px;top:224px;color:#12272e">1</div>
<div class="a m" style="left:753px;top:224px;color:#12272e">17</div>
<div class="a" style="left:0;top:238px;width:810px;height:14px;background:#daeeff"></div>
<div class="a m" style="left:0px;width:53px;text-align:right;top:238px;color:#12272e">39</div>
<div class="a m" style="left:59px;top:238px;color:#12272e">3.737099</div>
<div class="a m" style="left:130px;top:238px;color:#12272e">fe80::2001:877…</div>
<div class="a m" style="left:246px;top:238px;color:#12272e">ff02::1</div>
<div class="a m" style="left:358px;top:238px;color:#12272e">MLE</div>
<div class="a m" style="left:454px;width:71px;text-align:right;top:238px;color:#12272e">114</div>
<div class="a m" style="left:531px;top:238px;color:#12272e">Announce</div>
<div class="a m" style="left:675px;top:238px;color:#12272e">0</div>
<div class="a m" style="left:753px;top:238px;color:#12272e">11</div>
<div class="a" style="left:0;top:252px;width:810px;height:14px;background:#daeeff"></div>
<div class="a m" style="left:0px;width:53px;text-align:right;top:252px;color:#12272e">40</div>
<div class="a m" style="left:59px;top:252px;color:#12272e">3.745697</div>
<div class="a m" style="left:130px;top:252px;color:#12272e">fe80::2001:877…</div>
<div class="a m" style="left:246px;top:252px;color:#12272e">fe80::5057:11…</div>
<div class="a m" style="left:358px;top:252px;color:#12272e">MLE</div>
<div class="a m" style="left:454px;width:71px;text-align:right;top:252px;color:#12272e">119</div>
<div class="a m" style="left:531px;top:252px;color:#12272e">Announce</div>
<div class="a m" style="left:675px;top:252px;color:#12272e">0</div>
<div class="a m" style="left:753px;top:252px;color:#12272e">11</div>
<div class="a" style="left:0;top:266px;width:810px;height:14px;background:#ffffff"></div>
<div class="a m" style="left:0px;width:53px;text-align:right;top:266px;color:#12272e">41</div>
<div class="a m" style="left:59px;top:266px;color:#12272e">3.746317</div>
<div class="a m" style="left:358px;top:266px;color:#12272e">IEEE 802.15.4</div>
<div class="a m" style="left:454px;width:71px;text-align:right;top:266px;color:#12272e">41</div>
<div class="a m" style="left:531px;top:266px;color:#12272e">Ack</div>
<div class="a m" style="left:675px;top:266px;color:#12272e">0</div>
<div class="a m" style="left:753px;top:266px;color:#12272e">11</div>
<div class="a" style="left:0;top:280px;width:810px;height:14px;background:#fce0ff"></div>
<div class="a m" style="left:0px;width:53px;text-align:right;top:280px;color:#12272e">42</div>
<div class="a m" style="left:59px;top:280px;color:#12272e">4.157222</div>
<div class="a m" style="left:130px;top:280px;color:#12272e">fe80::3072:c3a…</div>
<div class="a m" style="left:246px;top:280px;color:#12272e">fe80::fcd6:91…</div>
<div class="a m" style="left:358px;top:280px;color:#12272e">ICMPv6</div>
<div class="a m" style="left:454px;width:71px;text-align:right;top:280px;color:#12272e">88</div>
<div class="a m" style="left:531px;top:280px;color:#12272e">Echo (ping) reques…</div>
<div class="a m" style="left:675px;top:280px;color:#12272e">1</div>
<div class="a m" style="left:753px;top:280px;color:#12272e">17</div>
<div class="a" style="left:0;top:294px;width:810px;height:14px;background:#ffffff"></div>
<div class="a m" style="left:0px;width:53px;text-align:right;top:294px;color:#12272e">43</div>
<div class="a m" style="left:59px;top:294px;color:#12272e">4.157751</div>
<div class="a m" style="left:358px;top:294px;color:#12272e">IEEE 802.15.4</div>
<div class="a m" style="left:454px;width:71px;text-align:right;top:294px;color:#12272e">41</div>
<div class="a m" style="left:531px;top:294px;color:#12272e">Ack</div>
<div class="a m" style="left:675px;top:294px;color:#12272e">1</div>
<div class="a m" style="left:753px;top:294px;color:#12272e">17</div>
<div class="a" style="left:0;top:308px;width:810px;height:14px;background:#fce0ff"></div>
<div class="a m" style="left:0px;width:53px;text-align:right;top:308px;color:#12272e">44</div>
<div class="a m" style="left:59px;top:308px;color:#12272e">4.161786</div>
<div class="a m" style="left:130px;top:308px;color:#12272e">fe80::fcd6:917…</div>
<div class="a m" style="left:246px;top:308px;color:#12272e">fe80::3072:c3…</div>
<div class="a m" style="left:358px;top:308px;color:#12272e">ICMPv6</div>
<div class="a m" style="left:454px;width:71px;text-align:right;top:308px;color:#12272e">88</div>
<div class="a m" style="left:531px;top:308px;color:#12272e">Echo (ping) reply …</div>
<div class="a m" style="left:675px;top:308px;color:#12272e">1</div>
<div class="a m" style="left:753px;top:308px;color:#12272e">17</div>
<div class="a" style="left:0;top:322px;width:810px;height:14px;background:#ffffff"></div>
<div class="a m" style="left:0px;width:53px;text-align:right;top:322px;color:#12272e">45</div>
<div class="a m" style="left:59px;top:322px;color:#12272e">4.162459</div>
<div class="a m" style="left:358px;top:322px;color:#12272e">IEEE 802.15.4</div>
<div class="a m" style="left:454px;width:71px;text-align:right;top:322px;color:#12272e">41</div>
<div class="a m" style="left:531px;top:322px;color:#12272e">Ack</div>
<div class="a m" style="left:675px;top:322px;color:#12272e">1</div>
<div class="a m" style="left:753px;top:322px;color:#12272e">17</div>
<div class="a" style="left:0;top:336px;width:810px;height:14px;background:#daeeff"></div>
<div class="a m" style="left:0px;width:53px;text-align:right;top:336px;color:#12272e">46</div>
<div class="a m" style="left:59px;top:336px;color:#12272e">4.371183</div>
<div class="a m" style="left:130px;top:336px;color:#12272e">fe80::5057:116…</div>
<div class="a m" style="left:246px;top:336px;color:#12272e">ff02::2</div>
<div class="a m" style="left:358px;top:336px;color:#12272e">MLE</div>
<div class="a m" style="left:454px;width:71px;text-align:right;top:336px;color:#12272e">99</div>
<div class="a m" style="left:531px;top:336px;color:#12272e">Parent Request</div>
<div class="a m" style="left:675px;top:336px;color:#12272e">1</div>
<div class="a m" style="left:753px;top:336px;color:#12272e">17</div>
<div class="a" style="left:0;top:350px;width:810px;height:14px;background:#daeeff"></div>
<div class="a m" style="left:0px;width:53px;text-align:right;top:350px;color:#12272e">47</div>
<div class="a m" style="left:59px;top:350px;color:#12272e">4.567477</div>
<div class="a m" style="left:130px;top:350px;color:#12272e">fe80::2001:877…</div>
<div class="a m" style="left:246px;top:350px;color:#12272e">fe80::5057:11…</div>
<div class="a m" style="left:358px;top:350px;color:#12272e">MLE</div>
<div class="a m" style="left:454px;width:71px;text-align:right;top:350px;color:#12272e">149</div>
<div class="a m" style="left:531px;top:350px;color:#12272e">Parent Response</div>
<div class="a m" style="left:675px;top:350px;color:#12272e">1</div>
<div class="a m" style="left:753px;top:350px;color:#12272e">17</div>
</div>
<div class="a" style="left:455px;top:296px;width:73px;height:14px;border:1px solid #2b7cb3;border-radius:1px"></div>
<div class="a" style="left:7px;top:303px;width:7px;height:1px;background:#fff"></div>
<div class="a" style="left:7px;top:303px;width:1px;height:6px;background:#fff"></div>
<div class="a" style="left:7px;top:310px;width:1px;height:192px;background:repeating-linear-gradient(#777 0 4px,transparent 4px 6px)"></div>
<div class="a" style="left:810px;top:122px;width:14px;height:380px;background:#dedede;border-left:1px solid #c4c4c4"></div>
<div class="a" style="left:811px;top:123px;width:13px;height:13px;background:linear-gradient(#fdfdfd,#f0f0f0)"></div>
<svg class="a" style="left:813px;top:126px" width="9" height="6"><path d="M0.5 5 H8.5 L4.5 0.5 Z" fill="#555"/></svg>
<div class="a" style="left:811px;top:136px;width:13px;height:6px;background:#e9e9e9"></div>
<div class="a" style="left:811px;top:141px;width:13px;height:28px;background:linear-gradient(90deg,#f6f6f6,#fdfdfd 40%,#f2f2f2);border-top:1px solid #cfcfcf;border-bottom:1px solid #c6c6c6"></div>
<div class="a" style="left:811px;top:489px;width:13px;height:13px;background:linear-gradient(#fdfdfd,#f0f0f0)"></div>
<svg class="a" style="left:813px;top:493px" width="9" height="6"><path d="M0.5 0.5 H8.5 L4.5 5 Z" fill="#555"/></svg>
<div class="a" style="left:0;top:503px;width:825px;height:5px;background:#efefef;border-bottom:1px solid #c4c4c4"></div>
<div class="a" style="left:405px;top:504px;width:1px;height:1px;background:#8a8a8a"></div>
<div class="a" style="left:408px;top:504px;width:1px;height:1px;background:#8a8a8a"></div>
<div class="a" style="left:411px;top:504px;width:1px;height:1px;background:#8a8a8a"></div>
<div class="a" style="left:414px;top:504px;width:1px;height:1px;background:#8a8a8a"></div>
<div class="a" style="left:417px;top:504px;width:1px;height:1px;background:#8a8a8a"></div>
<div class="a" style="left:420px;top:504px;width:1px;height:1px;background:#8a8a8a"></div>
<div class="a" style="left:0;top:508px;width:825px;height:119px;background:#fff;border-bottom:1px solid #a8a8a8;border-right:1px solid #a8a8a8"></div>
<div class="a" style="left:20px;top:522px;width:804px;height:84px;background:#ededed"></div>
<div class="a" style="left:0;top:508px;width:824px;height:14px;background:#308cc6"></div>
<div class="a m" style="left:23px;top:508px;color:#fff">Frame 33: 114 bytes on wire (912 bits), 114 bytes captured (912 bits) on interface 0</div>
<div class="a" style="left:8px;top:511px;width:0;height:0;border-left:4px solid #1e3a52;border-top:4px solid transparent;border-bottom:4px solid transparent"></div>
<div class="a m" style="left:23px;top:522px;color:#000">IEEE 802.15.4 TAP</div>
<div class="a" style="left:8px;top:525px;width:0;height:0;border-left:4px solid #666;border-top:4px solid transparent;border-bottom:4px solid transparent"></div>
<div class="a m" style="left:23px;top:536px;color:#000">IEEE 802.15.4 Data, Dst: Broadcast, Src: 52:57:11:65:f5:6a:66:3b</div>
<div class="a" style="left:8px;top:539px;width:0;height:0;border-left:4px solid #666;border-top:4px solid transparent;border-bottom:4px solid transparent"></div>
<div class="a m" style="left:23px;top:550px;color:#000">6LoWPAN, Src: fe80::5057:1165:f56a:663b, Dest: ff02::1</div>
<div class="a" style="left:8px;top:553px;width:0;height:0;border-left:4px solid #666;border-top:4px solid transparent;border-bottom:4px solid transparent"></div>
<div class="a m" style="left:23px;top:564px;color:#000">Internet Protocol Version 6, Src: fe80::5057:1165:f56a:663b, Dst: ff02::1</div>
<div class="a" style="left:8px;top:567px;width:0;height:0;border-left:4px solid #666;border-top:4px solid transparent;border-bottom:4px solid transparent"></div>
<div class="a m" style="left:23px;top:578px;color:#000">User Datagram Protocol, Src Port: 19788, Dst Port: 19788</div>
<div class="a" style="left:8px;top:581px;width:0;height:0;border-left:4px solid #666;border-top:4px solid transparent;border-bottom:4px solid transparent"></div>
<div class="a m" style="left:23px;top:592px;color:#000">Mesh Link Establishment</div>
<div class="a" style="left:8px;top:595px;width:0;height:0;border-left:4px solid #666;border-top:4px solid transparent;border-bottom:4px solid transparent"></div>
<div class="a" style="left:0;top:627px;width:825px;height:5px;background:#efefef;border-bottom:1px solid #c4c4c4"></div>
<div class="a" style="left:405px;top:628px;width:1px;height:1px;background:#8a8a8a"></div>
<div class="a" style="left:408px;top:628px;width:1px;height:1px;background:#8a8a8a"></div>
<div class="a" style="left:411px;top:628px;width:1px;height:1px;background:#8a8a8a"></div>
<div class="a" style="left:414px;top:628px;width:1px;height:1px;background:#8a8a8a"></div>
<div class="a" style="left:417px;top:628px;width:1px;height:1px;background:#8a8a8a"></div>
<div class="a" style="left:420px;top:628px;width:1px;height:1px;background:#8a8a8a"></div>
<div class="a" style="left:0;top:632px;width:825px;height:120px;background:#fff;border-bottom:1px solid #a8a8a8;border-right:1px solid #a8a8a8"></div>
<div class="a" style="left:0;top:632px;width:42px;height:119px;background:#ededed"></div>
<div class="a m" style="left:7px;top:632px;color:#555;letter-spacing:-0.2px">0000</div>
<div class="a" style="left:49px;top:632px;width:336px;height:14px;background:#308cc6"></div>
<div class="a m" style="left:49px;top:632px;color:#fff;letter-spacing:-0.2px">00 00 24 00 03 00 03 00  0b 00 00 00 01 00 04 00</div>
<div class="a" style="left:406px;top:632px;width:119px;height:14px;background:#308cc6"></div>
<div class="a m" style="left:406px;top:632px;color:#fff;letter-spacing:-0.2px">··$····· ········</div>
<div class="a m" style="left:7px;top:646px;color:#555;letter-spacing:-0.2px">0010</div>
<div class="a" style="left:49px;top:646px;width:336px;height:14px;background:#308cc6"></div>
<div class="a m" style="left:49px;top:646px;color:#fff;letter-spacing:-0.2px">00 00 00 c2 0a 00 01 00  f4 00 00 00 00 00 01 00</div>
<div class="a" style="left:406px;top:646px;width:119px;height:14px;background:#308cc6"></div>
<div class="a m" style="left:406px;top:646px;color:#fff;letter-spacing:-0.2px">········ ········</div>
<div class="a m" style="left:7px;top:660px;color:#555;letter-spacing:-0.2px">0020</div>
<div class="a" style="left:49px;top:660px;width:336px;height:14px;background:#308cc6"></div>
<div class="a m" style="left:49px;top:660px;color:#fff;letter-spacing:-0.2px">01 00 00 00 09 d8 26 ff  ff ff ff 99 0d 3b 66 6a</div>
<div class="a" style="left:406px;top:660px;width:119px;height:14px;background:#308cc6"></div>
<div class="a m" style="left:406px;top:660px;color:#fff;letter-spacing:-0.2px">······&amp;· ·····;fj</div>
<div class="a m" style="left:7px;top:674px;color:#555;letter-spacing:-0.2px">0030</div>
<div class="a" style="left:49px;top:674px;width:336px;height:14px;background:#308cc6"></div>
<div class="a m" style="left:49px;top:674px;color:#fff;letter-spacing:-0.2px">f5 65 11 57 52 15 01 00  00 00 ff ff ff ff ff e7</div>
<div class="a" style="left:406px;top:674px;width:119px;height:14px;background:#308cc6"></div>
<div class="a m" style="left:406px;top:674px;color:#fff;letter-spacing:-0.2px">·e·WR··· ········</div>
<div class="a m" style="left:7px;top:688px;color:#555;letter-spacing:-0.2px">0040</div>
<div class="a" style="left:49px;top:688px;width:336px;height:14px;background:#308cc6"></div>
<div class="a m" style="left:49px;top:688px;color:#fff;letter-spacing:-0.2px">b8 37 a8 52 10 b3 4b 2e  23 e9 97 6d 30 f8 b2 69</div>
<div class="a" style="left:406px;top:688px;width:119px;height:14px;background:#308cc6"></div>
<div class="a m" style="left:406px;top:688px;color:#fff;letter-spacing:-0.2px">·7·R··K. #··m0··i</div>
<div class="a m" style="left:7px;top:702px;color:#555;letter-spacing:-0.2px">0050</div>
<div class="a" style="left:49px;top:702px;width:336px;height:14px;background:#308cc6"></div>
<div class="a m" style="left:49px;top:702px;color:#fff;letter-spacing:-0.2px">73 27 bf 80 07 3f 3a ce  25 3d 9b 68 d3 7a f8 e0</div>
<div class="a" style="left:406px;top:702px;width:119px;height:14px;background:#308cc6"></div>
<div class="a m" style="left:406px;top:702px;color:#fff;letter-spacing:-0.2px">s'···?:· %=·h·z··</div>
<div class="a m" style="left:7px;top:716px;color:#555;letter-spacing:-0.2px">0060</div>
<div class="a" style="left:49px;top:716px;width:336px;height:14px;background:#308cc6"></div>
<div class="a m" style="left:49px;top:716px;color:#fff;letter-spacing:-0.2px">78 f2 c8 7e 98 0f b7 72  07 f0 17 62 3e 8f 36 80</div>
<div class="a" style="left:406px;top:716px;width:119px;height:14px;background:#308cc6"></div>
<div class="a m" style="left:406px;top:716px;color:#fff;letter-spacing:-0.2px">x··~···r ···b&gt;·6·</div>
<div class="a m" style="left:7px;top:730px;color:#555;letter-spacing:-0.2px">0070</div>
<div class="a" style="left:49px;top:730px;width:35px;height:14px;background:#308cc6"></div>
<div class="a m" style="left:49px;top:730px;color:#fff;letter-spacing:-0.2px">20 a7</div>
<div class="a" style="left:406px;top:730px;width:14px;height:14px;background:#308cc6"></div>
<div class="a m" style="left:406px;top:730px;color:#fff;letter-spacing:-0.2px"> ·</div>
<div class="a" style="left:0;top:752px;width:825px;height:26px;background:#efefef"></div>
<div class="a" style="left:-3px;top:752px;width:139px;height:26px;background:#fff;border:1px solid #c6c6c6;border-top:none;border-radius:0 0 3px 3px"></div>
<div class="a" style="left:10.86px;top:756px;font-size:12px;line-height:20px;font-weight:normal;color:#222222;transform:scaleX(1.1427);transform-origin:0 0;">Frame (114 bytes)</div>
<div class="a" style="left:136px;top:753px;width:291px;height:23px;background:#e8e8e8;border:1px solid #c6c6c6;border-radius:0 0 3px 3px"></div>
<div class="a" style="left:146.77px;top:755px;font-size:12px;line-height:20px;font-weight:normal;color:#222222;transform:scaleX(1.1258);transform-origin:0 0;">Decrypted IEEE 802.15.4 payload (45 bytes)</div>
<div class="a" style="left:427px;top:753px;width:273px;height:23px;background:#e8e8e8;border:1px solid #c6c6c6;border-radius:0 0 3px 3px"></div>
<div class="a" style="left:437.81px;top:755px;font-size:12px;line-height:20px;font-weight:normal;color:#222222;transform:scaleX(1.0934);transform-origin:0 0;">Decompressed 6LoWPAN IPHC (83 bytes)</div>
<div class="a" style="left:700px;top:753px;width:95px;height:23px;background:#e8e8e8;border:1px solid #c6c6c6;border-radius:0 0 3px 3px"></div>
<div class="a" style="left:700px;top:754px;width:94px;height:21px;overflow:hidden"><div class="a" style="left:-700px;margin-left:710.70px;top:-754px;margin-top:755px;font-size:12px;line-height:20px;font-weight:normal;color:#222222;transform:scaleX(1.1000);transform-origin:0 0;">Decrypted ML</div></div>
<div class="a" style="left:795px;top:753px;width:14px;height:25px;background:linear-gradient(#f8f8f8,#ececec);border:1px solid #cfcfcf;border-radius:3px"></div>
<div class="a" style="left:809px;top:753px;width:15px;height:25px;background:linear-gradient(#f8f8f8,#ececec);border:1px solid #cfcfcf;border-radius:3px"></div>
<svg class="a" style="left:799px;top:761px" width="6" height="9"><path d="M5 0.5 V8.5 L0.5 4.5 Z" fill="#c0c0c0"/></svg>
<svg class="a" style="left:814px;top:761px" width="6" height="9"><path d="M0.5 0.5 V8.5 L5 4.5 Z" fill="#333"/></svg>
<div class="a" style="left:0;top:778px;width:825px;height:22px;background:#efefef"></div>
<div class="a" style="left:9px;top:783px;width:14px;height:14px;border-radius:50%;background:radial-gradient(circle at 45% 35%,#ecec9a,#d6d650);border:1px solid #6e6e40"></div>
<svg class="a" style="left:32px;top:782px" width="16" height="16"><rect x="0.5" y="1" width="11.5" height="13.7" fill="#f4f4ee" stroke="#d0d0c8" stroke-width="0.6"/><rect x="0.8" y="1.2" width="11" height="3" fill="#3a9ad8"/><path d="M2 7.5 H9 M2 10 H9 M2 12.5 H9" stroke="#c8c8c0" stroke-width="0.8"/><path d="M4.2 10.5 L11.8 1.8 L13.8 3.6 L6.2 12.2 L3.8 12.8 Z" fill="#3a3a3a"/></svg>
<div class="a" style="left:61.35px;top:781px;font-size:12px;line-height:20px;font-weight:normal;color:#222222;transform:scaleX(1.1534);transform-origin:0 0;">Frame (frame), 114 bytes</div>
<div class="a" style="left:427px;top:782px;width:1px;height:16px;background:repeating-linear-gradient(#bbb 0 1px,transparent 1px 3px)"></div>
<div class="a" style="left:434.57px;top:781px;font-size:12px;line-height:20px;font-weight:normal;color:#222222;transform:scaleX(1.1291);transform-origin:0 0;">Packets: 1325 · Displayed: 1325 (100.0%)</div>
<div class="a" style="left:695px;top:782px;width:1px;height:16px;background:repeating-linear-gradient(#bbb 0 1px,transparent 1px 3px)"></div>
<div class="a" style="left:706.15px;top:781px;font-size:12px;line-height:20px;font-weight:normal;color:#222222;transform:scaleX(1.0513);transform-origin:0 0;">Profile: Default</div>
<div class="a" style="left:822px;top:789px;width:1px;height:1px;background:#8f8f8f"></div>
<div class="a" style="left:822px;top:792px;width:1px;height:1px;background:#8f8f8f"></div>
<div class="a" style="left:819px;top:792px;width:1px;height:1px;background:#8f8f8f"></div>
<div class="a" style="left:822px;top:795px;width:1px;height:1px;background:#8f8f8f"></div>
<div class="a" style="left:819px;top:795px;width:1px;height:1px;background:#8f8f8f"></div>
<div class="a" style="left:816px;top:795px;width:1px;height:1px;background:#8f8f8f"></div>
<div class="a" style="left:822px;top:798px;width:1px;height:1px;background:#8f8f8f"></div>
<div class="a" style="left:819px;top:798px;width:1px;height:1px;background:#8f8f8f"></div>
<div class="a" style="left:816px;top:798px;width:1px;height:1px;background:#8f8f8f"></div>
<div class="a" style="left:813px;top:798px;width:1px;height:1px;background:#8f8f8f"></div>
</body></html>
